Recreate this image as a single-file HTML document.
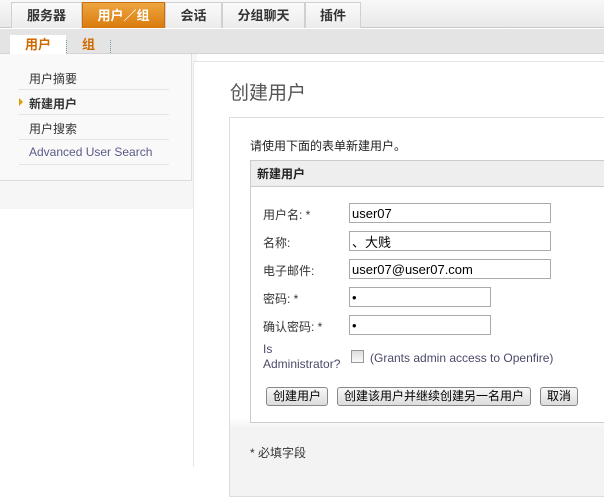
<!DOCTYPE html><html><head><meta charset="utf-8"><style>
*{margin:0;padding:0;box-sizing:border-box}
body{width:604px;height:467px;overflow:hidden;background:#fff;font-family:"Liberation Sans","Noto Sans CJK SC",sans-serif;font-size:12px;color:#333;position:relative}
.a{position:absolute}
.top{left:0;top:0;width:604px;height:28px;background:linear-gradient(#f8f8f8,#e8e8e8);border-bottom:1px solid #c8c8c8}
.tab{top:2px;height:26px;background:linear-gradient(#fafafa,#ececec);border:1px solid #d0d0d0;border-bottom:none;font-weight:bold;font-size:13px;text-align:center;line-height:25px;color:#333}
.sub{left:0;top:29px;width:604px;height:25px;background:#e4e4e4;border-bottom:1px solid #d4d4d4}
.nav{font-size:12px;color:#333}
.line{height:1px;background:#e4e4e4;left:19px;width:150px}
input.t{position:absolute;height:20px;border:1px solid #aaa;font:13px "Liberation Sans","Noto Sans CJK SC",sans-serif;padding-left:2px;color:#000}
.lb{left:263px;font-size:12px;color:#333}
.btn{top:387px;height:19px;border:1px solid #888;border-radius:3px;background:linear-gradient(#f8f8f8,#dcdcdc);font-size:12px;text-align:center;line-height:17px;color:#000}
</style></head><body>
<div class="a top"></div>
<div class="a tab" style="left:11px;width:71px">服务器</div>
<div class="a tab" style="left:82px;width:83px;background:linear-gradient(#eea640,#d97a0c);border-color:#c87010;color:#fff">用户／组</div>
<div class="a tab" style="left:165px;width:57px">会话</div>
<div class="a tab" style="left:222px;width:83px">分组聊天</div>
<div class="a tab" style="left:305px;width:56px">插件</div>
<div class="a sub"></div>
<div class="a" style="left:10px;top:35px;width:56px;height:19px;background:#fff;color:#d06a00;font-weight:bold;font-size:13px;text-align:center;line-height:20px">用户</div>
<div class="a" style="left:66px;top:40px;height:13px;border-left:1px dotted #79a"></div>
<div class="a" style="left:82px;top:35px;color:#d06a00;font-weight:bold;font-size:13px;line-height:20px">组</div>
<div class="a" style="left:110px;top:40px;height:13px;border-left:1px dotted #79a"></div>
<div class="a" style="left:0;top:54px;width:197px;height:155px;background:#f6f6f6"></div>
<div class="a" style="left:0;top:54px;width:192px;height:127px;background:#f9f9f9;border-right:1px solid #ddd;border-bottom:1px solid #ddd"></div>
<div class="a nav" style="left:29px;top:70px">用户摘要</div>
<div class="a line" style="top:89px"></div>
<div class="a" style="left:19px;top:98px;width:0;height:0;border-left:4px solid #d9a000;border-top:4px solid transparent;border-bottom:4px solid transparent"></div>
<div class="a nav" style="left:29px;top:95px;font-weight:bold">新建用户</div>
<div class="a line" style="top:114px"></div>
<div class="a nav" style="left:29px;top:120px">用户搜索</div>
<div class="a line" style="top:139px"></div>
<div class="a nav" style="left:29px;top:145px;color:#5a5a88">Advanced User Search</div>
<div class="a line" style="top:164px"></div>
<div class="a" style="left:193px;top:61px;width:411px;height:406px;background:#fff;border-top:1px solid #e4e4e4;border-left:1px solid #e8e8e8"></div>
<div class="a" style="left:230px;top:78px;font-size:19px;color:#555">创建用户</div>
<div class="a" style="left:229px;top:117px;width:380px;height:380px;border:1px solid #ddd;background:linear-gradient(#fff 0,#fff 300px,#f3f3f3 310px)"></div>
<div class="a" style="left:250px;top:137px;font-size:12px;color:#222">请使用下面的表单新建用户。</div>
<div class="a" style="left:250px;top:160px;width:360px;height:263px;border:1px solid #ccc;background:#fff"></div>
<div class="a" style="left:251px;top:161px;width:360px;height:26px;background:#eee;border-bottom:1px solid #ccc;font-weight:bold;font-size:12px;line-height:26px;padding-left:6px;color:#222">新建用户</div>
<div class="a lb" style="top:206px">用户名: *</div>
<div class="a lb" style="top:234px">名称:</div>
<div class="a lb" style="top:262px">电子邮件:</div>
<div class="a lb" style="top:290px">密码: *</div>
<div class="a lb" style="top:318px">确认密码: *</div>
<div class="a lb" style="top:342px;line-height:15px;color:#4a4a6a">Is<br>Administrator?</div>
<input class="t" style="left:349px;top:203px;width:202px" value="user07">
<input class="t" style="left:349px;top:231px;width:202px" value="、大贱">
<input class="t" style="left:349px;top:259px;width:202px" value="user07@user07.com">
<input class="t" style="left:349px;top:287px;width:142px" value="•">
<input class="t" style="left:349px;top:315px;width:142px" value="•">
<div class="a" style="left:351px;top:350px;width:13px;height:13px;border:1px solid #999;background:linear-gradient(#ddd,#fafafa)"></div>
<div class="a" style="left:370px;top:351px;color:#4a4a6a">(Grants admin access to Openfire)</div>
<div class="a btn" style="left:266px;width:62px">创建用户</div>
<div class="a btn" style="left:337px;width:194px">创建该用户并继续创建另一名用户</div>
<div class="a btn" style="left:540px;width:38px">取消</div>
<div class="a" style="left:250px;top:444px;color:#333">* 必填字段</div>
</body></html>
